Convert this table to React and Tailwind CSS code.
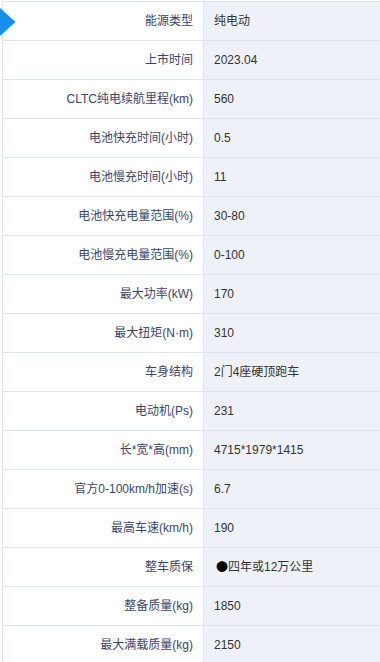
import React from "react";

const specs = [
    ["能源类型", "纯电动"],
    ["上市时间", "2023.04"],
    ["CLTC纯电续航里程(km)", "560"],
    ["电池快充时间(小时)", "0.5"],
    ["电池慢充时间(小时)", "11"],
    ["电池快充电量范围(%)", "30-80"],
    ["电池慢充电量范围(%)", "0-100"],
    ["最大功率(kW)", "170"],
    ["最大扭矩(N·m)", "310"],
    ["车身结构", "2门4座硬顶跑车"],
    ["电动机(Ps)", "231"],
    ["长*宽*高(mm)", "4715*1979*1415"],
    ["官方0-100km/h加速(s)", "6.7"],
    ["最高车速(km/h)", "190"],
    ["整车质保", "四年或12万公里", true],
    ["整备质量(kg)", "1850"],
    ["最大满载质量(kg)", "2150"],
];

const App = () => {
    return (
        <div
            className="relative w-[380px] h-[662px] overflow-hidden bg-white text-[12px]"
            style={{ fontFamily: '"Liberation Sans", "Noto Sans CJK SC", sans-serif' }}
        >
            <div className="ml-[2px] mt-[1px] border-l border-t border-[#dce6f2]">
                {specs.map(([label, value, dot]) => (
                    <div key={label} className="flex h-[39px] border-b border-[#dce6f2]">
                        <div className="w-[201px] shrink-0 border-r border-[#dce6f2] flex items-center justify-end pr-[10px] text-[#3a4468]">
                            {label}
                        </div>
                        <div className="flex-1 bg-[#eef2f8] flex items-center pl-[10px] text-[#333]">
                            {dot && (
                                <span className="ml-[2px] font-['Noto_Sans_CJK_SC'] text-black">●</span>
                            )}
                            {value}
                        </div>
                    </div>
                ))}
            </div>
            <svg
                className="absolute left-0 top-[8px]"
                width="16"
                height="28"
                viewBox="0 0 16 28"
            >
                <polygon points="0,0 15.5,14 0,28" fill="#1b8fe3" />
            </svg>
        </div>
    );
};

export default App;
